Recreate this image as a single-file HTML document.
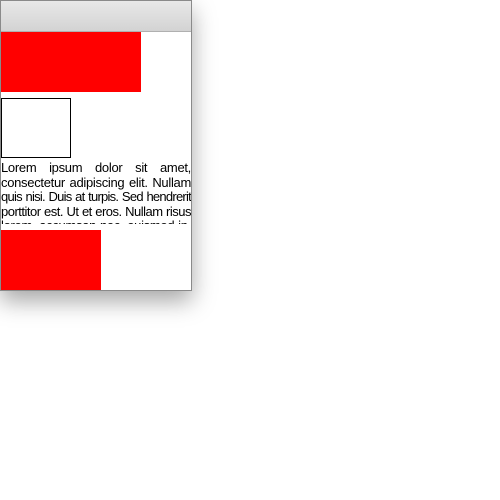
<!DOCTYPE html>
<html><head><style>
html,body{margin:0;padding:0;background:#fff;}
.win{position:absolute;left:0;top:0;width:190px;height:289px;border:1px solid #8a8a8a;background:#fff;box-shadow:0 10px 22px rgba(0,0,0,0.35);overflow:hidden;}
.title{position:absolute;left:0;top:0;width:190px;height:30px;background:linear-gradient(#e8e8e8,#d3d3d3);border-bottom:1px solid #b0b0b0;}
.r1{position:absolute;left:0;top:31px;width:140px;height:60px;background:#f00;}
.box{position:absolute;left:0;top:97px;width:68px;height:58px;border:1px solid #000;}
.txt{position:absolute;left:0;top:160px;width:190px;height:63px;overflow:hidden;font-family:"Liberation Sans",sans-serif;font-size:13px;line-height:14.5px;color:#000;letter-spacing:-0.3px;}
.txt div{text-align:justify;text-align-last:justify;white-space:nowrap;height:14.5px;overflow:hidden;}
.r2{position:absolute;left:0;top:229px;width:100px;height:60px;background:#f00;}
</style></head><body>
<div class="win">
<div class="title"></div>
<div class="r1"></div>
<div class="box"></div>
<div class="txt">
<div>Lorem ipsum dolor sit amet,</div>
<div>consectetur adipiscing elit. Nullam</div>
<div style="letter-spacing:-0.75px;word-spacing:-1px">quis nisi. Duis at turpis. Sed hendrerit</div>
<div style="letter-spacing:-0.5px">porttitor est. Ut et eros. Nullam risus</div>
<div>lorem, accumsan nec, euismod in,</div>
</div>
<div class="r2"></div>
</div>
</body></html>
